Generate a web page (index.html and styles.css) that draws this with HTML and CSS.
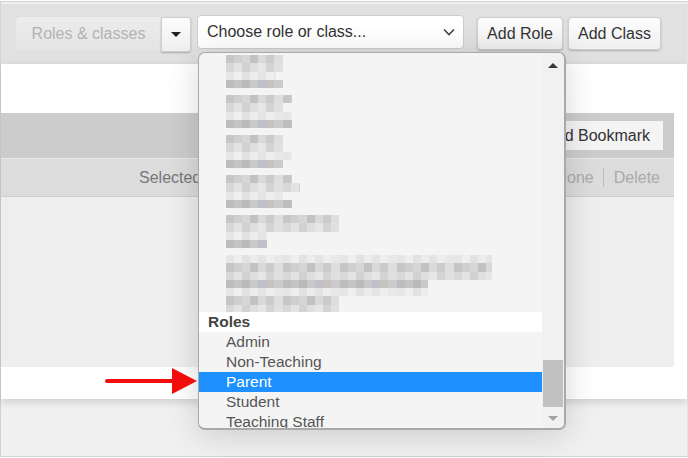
FILE: index.html
```html
<!DOCTYPE html>
<html>
<head>
<meta charset="utf-8">
<link rel="stylesheet" href="styles.css">
</head>
<body>
<div class="frame">
  <div class="toolbar">
    <div class="split">
      <button class="btn-disabled">Roles &amp; classes</button>
      <button class="btn-caret"><span class="caret"></span></button>
    </div>
    <div class="select">
      <span>Choose role or class...</span>
      <svg class="chev" width="12" height="8" viewBox="0 0 12 8"><path d="M1 1.5 L6 6.5 L11 1.5" fill="none" stroke="#444" stroke-width="1.6"/></svg>
    </div>
    <button class="btn btn-role">Add Role</button>
    <button class="btn btn-class">Add Class</button>
  </div>
  <div class="panel">
    <div class="head-space"></div>
    <div class="band-dark">
      <button class="btn-bookmark">Add Bookmark</button>
    </div>
    <div class="band-light">
      <span class="selected">Selected: 0</span>
      <span class="actions">
        <span>Select All</span><span class="sep"></span><span>Select None</span><span class="sep"></span><span>Delete</span>
      </span>
    </div>
    <div class="content"></div>
    <div class="foot-space"></div>
  </div>
</div>

<div class="dropdown">
  <div class="list">
    <div class="blur-item">
      <div class="mz r1 w57"></div><div class="mz r2 w57"></div><div class="mz r3 w50"></div><div class="mz r4 w57"></div>
    </div>
    <div class="blur-item">
      <div class="mz r1 w66"></div><div class="mz r2 w57"></div><div class="mz r3 w66"></div><div class="mz r4 w66"></div>
    </div>
    <div class="blur-item">
      <div class="mz r1 w57"></div><div class="mz r2 w57"></div><div class="mz r3 w66"></div><div class="mz r4 w57"></div>
    </div>
    <div class="blur-item">
      <div class="mz r1 w66"></div><div class="mz r2 w74"></div><div class="mz r3 w57"></div><div class="mz r4 w66"></div>
    </div>
    <div class="blur-item">
      <div class="mz r1 w113"></div><div class="mz r2 w113"></div><div class="mz r3 w41"></div><div class="mz r4 w41"></div>
    </div>
    <div class="blur-item last">
      <div class="mz r3 w266"></div><div class="mz r1 w266"></div><div class="mz r2 w266"></div><div class="mz r4 w202"></div><div class="mz r3 w202"></div><div class="mz r1 w113"></div><div class="mz r2 w113"></div>
    </div>
    <div class="group">Roles</div>
    <div class="opt">Admin</div>
    <div class="opt">Non-Teaching</div>
    <div class="opt active">Parent</div>
    <div class="opt">Student</div>
    <div class="opt">Teaching Staff</div>
  </div>
  <div class="scrollbar">
    <span class="arrow-up"></span>
    <span class="thumb"></span>
    <span class="arrow-down"></span>
  </div>
</div>

<svg class="pointer" width="100" height="34" viewBox="0 0 100 34">
  <line x1="7" y1="16" x2="76" y2="16" stroke="#f20d0d" stroke-width="4" stroke-linecap="round"/>
  <polygon points="72,3 97,16 72,29" fill="#f20d0d"/>
</svg>
</body>
</html>
```
FILE: styles.css
```css
* { box-sizing: border-box; }
html, body { margin: 0; padding: 0; }
body {
  width: 688px;
  height: 458px;
  overflow: hidden;
  background: #fff;
  font-family: "Liberation Sans", Arial, sans-serif;
  font-size: 16px;
  color: #333;
  padding-top: 1px;
  position: relative;
}
button { font-family: inherit; font-size: inherit; }

.frame {
  width: 688px;
  height: 456px;
  border: 1px solid #d2d2d2;
  border-right-color: #e4e4e4;
  background: #f0f0f0;
  padding-top: 2px;
  display: flex;
  flex-direction: column;
}

/* toolbar */
.toolbar {
  height: 60px;
  background: #e1e1e1;
  display: flex;
  align-items: flex-start;
  padding-left: 15px;
}
.split { display: flex; margin-top: 13px; }
.btn-disabled {
  width: 145px;
  height: 34px;
  border: none;
  border-radius: 4px 0 0 4px;
  background: linear-gradient(#ececec, #e4e4e4);
  color: #b3b3b3;
  box-shadow: 0 0 1px rgba(0,0,0,0.08);
  padding: 0;
}
.btn-caret {
  width: 30px;
  height: 35px;
  border: 1px solid #cfcfcf;
  border-radius: 0 3px 3px 0;
  background: linear-gradient(#fcfcfc, #efefef);
  box-shadow: 0 1px 2px rgba(0,0,0,0.25);
  display: flex;
  align-items: center;
  justify-content: center;
  padding: 0;
}
.caret {
  width: 0; height: 0;
  border-left: 5px solid transparent;
  border-right: 5px solid transparent;
  border-top: 5px solid #222;
}
.select {
  margin-top: 11px;
  margin-left: 6px;
  width: 267px;
  height: 34px;
  border: 1px solid #cdcdcd;
  border-radius: 4px;
  background: #fff;
  display: flex;
  align-items: center;
  justify-content: space-between;
  padding: 0 8px 0 9px;
  color: #333;
}
.btn {
  margin-top: 13px;
  height: 33px;
  border: 1px solid #cdcdcd;
  border-radius: 4px;
  background: linear-gradient(#fdfdfd, #f0f0f0);
  box-shadow: 0 1px 2px rgba(0,0,0,0.22);
  color: #333;
  padding: 0;
}
.btn-role { margin-left: 13px; width: 86px; }
.btn-class { margin-left: 5px; width: 93px; }

/* panel */
.panel {
  height: 335px;
  background: #fff;
  display: flex;
  flex-direction: column;
  box-shadow: 0 3px 8px rgba(0,0,0,0.14);
}
.head-space { height: 49px; }
.band-dark {
  height: 45px;
  margin-right: 13px;
  background: #cccccc;
  display: flex;
  justify-content: flex-end;
  align-items: center;
  padding-right: 11px;
}
.btn-bookmark {
  height: 29px;
  width: 130px;
  border: none;
  background: #f4f4f4;
  color: #333;
  text-align: right;
  padding: 0 13px 0 0;
}
.band-light {
  height: 39px;
  margin-right: 13px;
  background: #dcdcdc;
  border-top: 1px solid #e9e9e9;
  border-bottom: 1px solid #cdcdcd;
  display: flex;
  align-items: center;
  padding-right: 14px;
}
.selected { margin-left: 138px; color: #777; }
.actions {
  margin-left: auto;
  display: flex;
  align-items: center;
  color: #aaa;
}
.sep {
  width: 1px;
  height: 19px;
  background: #bdbdbd;
  margin: 0 10px 0 9px;
}
.content {
  height: 170px;
  margin-right: 13px;
  background: #eeeeee;
}
.foot-space { height: 32px; }

/* dropdown */
.dropdown {
  position: absolute;
  left: 198px;
  top: 52px;
  width: 368px;
  height: 378px;
  border: 1px solid #a9a9a9;
  border-right-width: 2px;
  border-bottom-width: 2px;
  border-radius: 7px;
  background: #f4f4f4;
  display: flex;
  overflow: hidden;
  box-shadow: 0 4px 32px rgba(0,0,0,0.16);
  font-size: 15.5px;
}
.list {
  width: 343px;
  overflow: hidden;
  flex: none;
}
.blur-item {
  height: 40px;
  padding: 2px 0 0 27px;
}
.blur-item.last { height: 59px; }
.mz { height: 8.25px; }
.w41 { width: 41px; }
.w50 { width: 50px; }
.w57 { width: 57px; }
.w66 { width: 66px; }
.w74 { width: 74px; }
.w113 { width: 113px; }
.w202 { width: 202px; }
.w266 { width: 266px; }
.r1 { background: repeating-linear-gradient(90deg, #c6c6c6 0 8px, #cfcfcf 8px 16px, #d6d6d6 16px 24px, #c2c2c2 24px 32px, #d9d9d9 32px 40px, #cbcbcb 40px 48px, #dedede 48px 57px); }
.r2 { background: repeating-linear-gradient(90deg, #d8d8d8 0 8px, #e3e3e3 8px 16px, #d2d2d2 16px 24px, #dfdfdf 24px 32px, #e6e6e6 32px 40px, #d4d4d4 40px 48px, #e0e0e0 48px 57px); }
.r3 { background: repeating-linear-gradient(90deg, #e6e6e6 0 8px, #efefef 8px 16px, #e2e2e2 16px 24px, #ececec 24px 32px, #e4e4e4 32px 40px, #eeeeee 40px 48px, #e8e8e8 48px 57px); }
.r4 { background: repeating-linear-gradient(90deg, #bdbdbd 0 8px, #c4c4c4 8px 16px, #bababa 16px 24px, #c9c9c9 24px 32px, #c0c0c8 32px 40px, #c6c3bf 40px 48px, #cbcbcb 48px 57px); }

.group {
  height: 20px;
  line-height: 20px;
  background: #fff;
  font-weight: bold;
  color: #444;
  padding-left: 9px;
}
.opt {
  height: 20px;
  line-height: 20px;
  padding-left: 27px;
  color: #555;
  white-space: nowrap;
}
.opt.active {
  background: #1e90ff;
  color: #fff;
}
.scrollbar {
  flex: 1;
  position: relative;
  background: #f1f1f1;
}
.arrow-up {
  position: absolute;
  left: 6px; top: 10px;
  width: 0; height: 0;
  border-left: 5px solid transparent;
  border-right: 5px solid transparent;
  border-bottom: 5px solid #3a3a3a;
}
.thumb {
  position: absolute;
  left: 1px; top: 307px;
  width: 20px; height: 47px;
  background: #c1c1c1;
}
.arrow-down {
  position: absolute;
  left: 6px; top: 363px;
  width: 0; height: 0;
  border-left: 5px solid transparent;
  border-right: 5px solid transparent;
  border-top: 5px solid #a3a3a3;
}
.pointer {
  position: absolute;
  left: 100px;
  top: 365px;
}
```
